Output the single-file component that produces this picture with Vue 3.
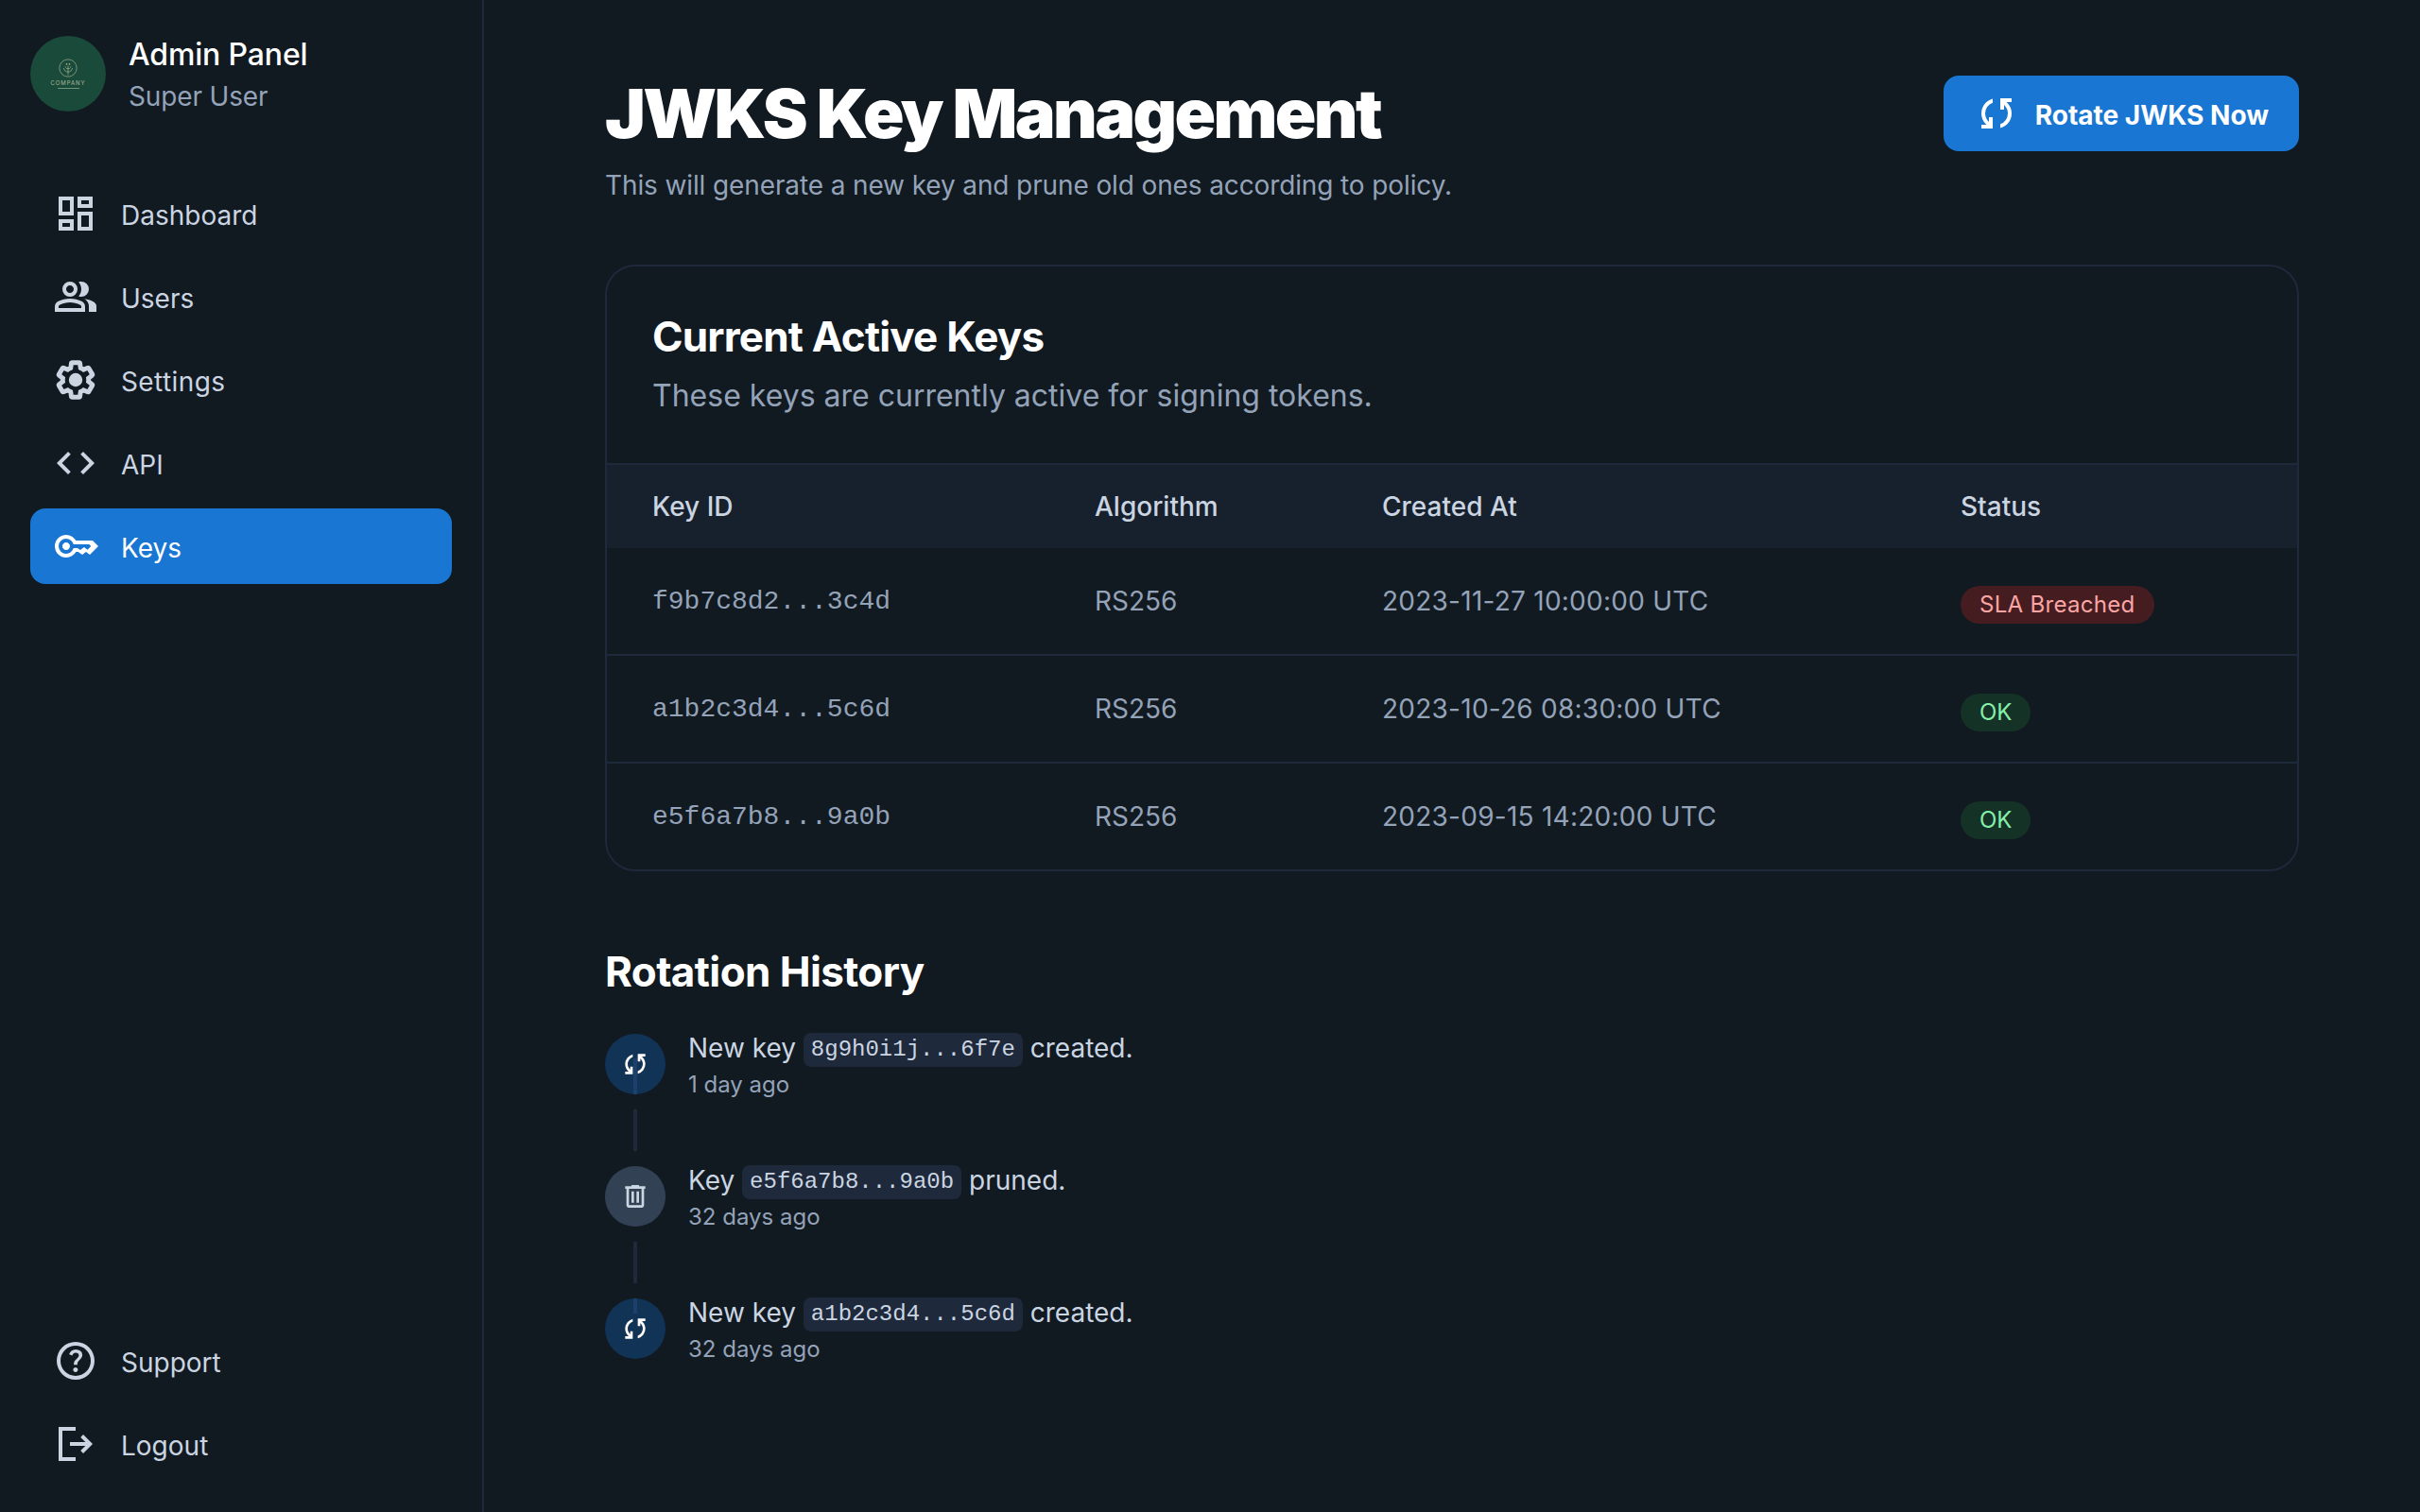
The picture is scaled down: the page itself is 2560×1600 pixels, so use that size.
<template>
  <div class="layout">
    <aside class="sidebar">
      <div class="profile">
        <div class="avatar">
          <svg class="logo-mark" viewBox="0 0 24 24" fill="none" stroke="#a9b89a" stroke-width="0.8">
            <circle cx="12" cy="12" r="11" />
            <path d="M12 21V9M12 17c-3 0-5-2-5.500-5M12 17c3 0 5-2 5.500-5M12 13c-2 0-3-1-3.500-3M12 13c2 0 3-1 3.500-3" />
            <path d="M9.500 6.500l1.500 1M14.500 6.500l-1.500 1" stroke="#d8c98a" stroke-width="1.400" />
          </svg>
          <span class="logo-word">COMPANY</span>
          <span class="logo-tag"></span>
        </div>
        <div class="profile-text">
          <div class="profile-name">Admin Panel</div>
          <div class="profile-role">Super User</div>
        </div>
      </div>

      <nav class="nav">
        <a v-for="item in navItems" :key="item.label" class="nav-item" :class="{ active: item.active }">
          <svg class="nav-icon" viewBox="0 0 24 24" fill="currentColor"><path :d="item.icon" /></svg>
          <span class="nav-label">{{ item.label }}</span>
        </a>
        <a class="nav-item">
          <svg class="nav-icon" viewBox="0 0 24 24" fill="none" stroke="currentColor">
            <path :d="gearPath" stroke-width="2.600" transform="translate(.6 .6) scale(.95)" />
            <circle cx="12" cy="12" r="3.600" fill="currentColor" stroke="none" />
          </svg>
          <span class="nav-label settings-label">Settings</span>
        </a>
        <a v-for="item in navItemsLower" :key="item.label" class="nav-item" :class="{ active: item.active }">
          <svg class="nav-icon" viewBox="0 0 24 24" fill="currentColor"><path :d="item.icon" /></svg>
          <span class="nav-label">{{ item.label }}</span>
        </a>
      </nav>

      <nav class="nav nav-bottom">
        <a v-for="item in footerItems" :key="item.label" class="nav-item">
          <svg class="nav-icon" viewBox="0 0 24 24" fill="currentColor"><path :d="item.icon" /></svg>
          <span class="nav-label">{{ item.label }}</span>
        </a>
      </nav>
    </aside>

    <main class="main">
      <header class="page-head">
        <div>
          <h1 class="page-title">JWKS Key Management</h1>
          <p class="page-sub">This will generate a new key and prune old ones according to policy.</p>
        </div>
        <button class="rotate-btn">
          <svg class="btn-icon" viewBox="0 0 24 24" fill="currentColor"><path :d="syncPath" /></svg>
          <span class="nav-label">Rotate JWKS Now</span>
        </button>
      </header>

      <section class="card">
        <div class="card-head">
          <h2 class="card-title">Current Active Keys</h2>
          <p class="card-sub">These keys are currently active for signing tokens.</p>
        </div>
        <table class="keys">
          <thead>
            <tr>
              <th class="col-id">Key ID</th>
              <th class="col-alg">Algorithm</th>
              <th class="col-date">Created At</th>
              <th>Status</th>
            </tr>
          </thead>
          <tbody>
            <tr v-for="key in keys" :key="key.id">
              <td class="mono">{{ key.id }}</td>
              <td>{{ key.alg }}</td>
              <td class="date">{{ key.created }}</td>
              <td class="status"><span class="badge" :class="key.ok ? 'badge-ok' : 'badge-bad'">{{ key.status }}</span></td>
            </tr>
          </tbody>
        </table>
      </section>

      <section class="history">
        <h2 class="history-title">Rotation History</h2>
        <ul class="timeline">
          <li v-for="(event, index) in history" :key="index" class="event">
            <div class="dot" :class="event.type">
              <span v-if="index === 0" class="dot-tail"></span>
              <span v-if="index === history.length - 1" class="dot-head"></span>
              <svg class="dot-icon" viewBox="0 0 24 24" fill="currentColor">
                <path :d="event.type === 'prune' ? trashPath : syncPath" />
              </svg>
            </div>
            <span v-if="index < history.length - 1" class="link"></span>
            <div class="event-body">
              <p class="event-text">{{ event.before }} <code class="chip">{{ event.key }}</code> {{ event.after }}</p>
              <p class="event-time">{{ event.time }}</p>
            </div>
          </li>
        </ul>
      </section>
    </main>
  </div>
</template>

<script setup>
const syncPath = 'M4 20v-2h2.75l-.4-.35q-1.225-1.225-1.787-2.662Q4 13.55 4 12.05q0-2.775 1.663-4.938Q7.325 4.95 10 4.25v2.1Q8.2 7 7.1 8.562 6 10.125 6 12.05q0 1.125.425 2.187Q6.85 15.3 7.75 16.2l.25.25V14h2v6Zm10-.25v-2.1q1.8-.65 2.9-2.212Q18 13.875 18 11.95q0-1.125-.425-2.187Q17.15 8.7 16.25 7.8L16 7.55V10h-2V4h6v2h-2.75l.4.35q1.225 1.225 1.788 2.662Q20 10.45 20 11.95q0 2.775-1.663 4.938Q16.675 19.05 14 19.75Z'
const trashPath = 'M7 21q-.825 0-1.412-.587Q5 19.825 5 19V6H4V4h5V3h6v1h5v2h-1v13q0 .825-.587 1.413Q17.825 21 17 21ZM17 6H7v13h10ZM9 17h2V8H9Zm4 0h2V8h-2ZM7 6v13Z'
const gearPath = 'M19.140 12.940c.04-.3.06-.61.06-.94 0-.32-.02-.64-.07-.94l2.030-1.580c.18-.14.23-.41.12-.61l-1.920-3.320c-.12-.22-.37-.29-.59-.22l-2.390.96c-.5-.38-1.030-.7-1.620-.94l-.36-2.540c-.04-.24-.24-.41-.48-.41h-3.840c-.24 0-.43.17-.47.41l-.36 2.540c-.59.24-1.130.57-1.620.94l-2.390-.96c-.22-.08-.47 0-.59.22L2.740 8.870c-.12.21-.08.47.12.61l2.030 1.580c-.05.3-.09.63-.09.94s.02.64.07.94l-2.030 1.580c-.18.14-.23.41-.12.61l1.920 3.320c.12.22.37.29.59.22l2.390-.96c.5.38 1.030.7 1.620.94l.36 2.540c.05.24.24.41.48.41h3.840c.24 0 .44-.17.47-.41l.36-2.540c.59-.24 1.130-.56 1.620-.94l2.390.96c.22.08.47 0 .59-.22l1.920-3.320c.12-.22.07-.47-.12-.61l-2.010-1.580z'

const navItems = [
  { label: 'Dashboard', icon: 'M19 5v2h-4V5h4M9 5v6H5V5h4m10 8v6h-4v-6h4M9 17v2H5v-2h4M21 3h-8v6h8V3zM11 3H3v10h8V3zm10 8h-8v10h8V11zm-10 4H3v6h8v-6z' },
  { label: 'Users', icon: 'M1 20v-2.800q0-.85.438-1.563.437-.712 1.162-1.087 1.550-.775 3.150-1.163Q7.350 13 9 13t3.250.387q1.600.388 3.150 1.163.725.375 1.162 1.087Q17 16.350 17 17.200V20Zm18 0v-3q0-1.100-.612-2.113-.613-1.012-1.738-1.737 1.275.15 2.400.512 1.125.363 2.100.888.900.5 1.375 1.112Q23 16.275 23 17v3ZM9 12q-1.650 0-2.825-1.175Q5 9.650 5 8q0-1.650 1.175-2.825Q7.350 4 9 4q1.650 0 2.825 1.175Q13 6.350 13 8q0 1.650-1.175 2.825Q10.650 12 9 12Zm10-4q0 1.650-1.175 2.825Q16.650 12 15 12q-.275 0-.7-.062-.425-.063-.7-.138.675-.8 1.038-1.775Q15 9.050 15 8q0-1.050-.362-2.025Q14.275 5 13.600 4.200q.350-.125.700-.162Q14.650 4 15 4q1.650 0 2.825 1.175Q19 6.350 19 8ZM3 18h12v-.8q0-.275-.137-.5-.138-.225-.363-.35-1.350-.675-2.725-1.012Q10.400 15 9 15t-2.775.338Q4.850 15.675 3.500 16.350q-.225.125-.363.35-.137.225-.137.5Zm6-8q.825 0 1.413-.588Q11 8.825 11 8t-.587-1.412Q9.825 6 9 6q-.825 0-1.412.588Q7 7.175 7 8t.588 1.412Q8.175 10 9 10Z' }
]
const navItemsLower = [
  { label: 'API', icon: 'M9.400 16.600 4.800 12l4.600-4.600L8 6l-6 6 6 6 1.400-1.400zm5.200 0 4.600-4.600-4.600-4.600L16 6l6 6-6 6-1.400-1.400z' },
  { label: 'Keys', active: true, icon: 'M7 14q-.825 0-1.412-.587Q5 12.825 5 12q0-.825.588-1.413Q6.175 10 7 10t1.412.587Q9 11.175 9 12q0 .825-.588 1.413Q7.825 14 7 14Zm0 4q-2.500 0-4.250-1.750T1 12q0-2.500 1.750-4.250T7 6q1.675 0 3.038.825Q11.400 7.650 12.200 9H21l3 3-4.500 4.500-2-1.500-2 1.500-2.125-1.500H12.200q-.8 1.350-2.162 2.175Q8.675 18 7 18Zm0-2q1.400 0 2.463-.85T10.875 13H13l1.450 1.025L16.500 12.500l1.775 1.375L20.150 12l-1-1h-8.275q-.35-1.300-1.412-2.150Q8.400 8 7 8 5.350 8 4.175 9.175 3 10.350 3 12q0 1.650 1.175 2.825Q5.350 16 7 16Z' }
]
const footerItems = [
  { label: 'Support', icon: 'M11.950 18q.525 0 .888-.363.362-.362.362-.887t-.362-.887q-.363-.363-.888-.363t-.888.363q-.362.362-.362.887t.362.887q.363.363.888.363Zm-.9-3.850h1.850q0-.825.188-1.300.187-.475 1.062-1.300.65-.65 1.025-1.238.375-.587.375-1.412 0-1.400-1.025-2.150T12.100 6q-1.425 0-2.312.75-.888.75-1.238 1.800l1.650.65q.125-.45.563-.975Q11.200 7.700 12.100 7.700q.8 0 1.200.437.4.438.4.963 0 .5-.3.938-.3.437-.75.812-1.100.975-1.350 1.475-.25.5-.25 1.825ZM12 22q-2.075 0-3.900-.788-1.825-.787-3.175-2.137-1.350-1.350-2.137-3.175Q2 14.075 2 12t.788-3.900q.787-1.825 2.137-3.175 1.350-1.350 3.175-2.138Q9.925 2 12 2t3.900.787q1.825.788 3.175 2.138 1.350 1.350 2.137 3.175Q22 9.925 22 12t-.788 3.900q-.787 1.825-2.137 3.175-1.350 1.350-3.175 2.137Q14.075 22 12 22Zm0-2q3.350 0 5.675-2.325Q20 15.350 20 12q0-3.350-2.325-5.675Q15.350 4 12 4 8.650 4 6.325 6.325 4 8.650 4 12q0 3.350 2.325 5.675Q8.650 20 12 20Z' },
  { label: 'Logout', icon: 'M3 3h9v2H5v14h7v2H3Zm13 14-1.375-1.450 2.550-2.550H9v-2h8.175l-2.550-2.550L16 7l5 5Z' }
]

const keys = [
  { id: 'f9b7c8d2...3c4d', alg: 'RS256', created: '2023-11-27 10:00:00 UTC', status: 'SLA Breached', ok: false },
  { id: 'a1b2c3d4...5c6d', alg: 'RS256', created: '2023-10-26 08:30:00 UTC', status: 'OK', ok: true },
  { id: 'e5f6a7b8...9a0b', alg: 'RS256', created: '2023-09-15 14:20:00 UTC', status: 'OK', ok: true }
]

const history = [
  { type: 'create', before: 'New key', key: '8g9h0i1j...6f7e', after: 'created.', time: '1 day ago' },
  { type: 'prune', before: 'Key', key: 'e5f6a7b8...9a0b', after: 'pruned.', time: '32 days ago' },
  { type: 'create', before: 'New key', key: 'a1b2c3d4...5c6d', after: 'created.', time: '32 days ago' }
]
</script>

<style>
html,
body {
  background: #111921;
}
</style>

<style scoped>
.layout {
  display: flex;
  min-height: 1600px;
  font-family: Inter, "Noto Sans", sans-serif;
  background: #111921;
  color: #fff;
}

.sidebar {
  box-sizing: border-box;
  width: 512px;
  height: 1600px;
  flex-shrink: 0;
  display: flex;
  flex-direction: column;
  padding: 32px;
  border-right: 2px solid #1e293b;
}

.profile {
  display: flex;
  align-items: center;
  gap: 24px;
  min-height: 92px;
  margin-bottom: 62px;
}

.avatar {
  width: 80px;
  height: 80px;
  border-radius: 50%;
  background: #1a4a3a;
  display: flex;
  flex-direction: column;
  align-items: center;
  justify-content: center;
  gap: 1px;
}

.logo-mark {
  width: 20px;
  height: 20px;
  margin-bottom: 2px;
}

.logo-word {
  font-size: 6px;
  line-height: 6px;
  letter-spacing: 0.16em;
  color: #a9b89a;
}

.logo-tag {
  width: 23px;
  height: 1px;
  margin-top: 1px;
  background: #71917d;
}

.profile-name {
  font-size: 32px;
  line-height: 48px;
  font-weight: 500;
  letter-spacing: -0.15px;
}

.profile-role {
  font-size: 28px;
  line-height: 40px;
  letter-spacing: -0.15px;
  color: #94a3b8;
}

.nav {
  display: flex;
  flex-direction: column;
  gap: 8px;
}

.nav-bottom {
  margin-top: auto;
}

.nav-item {
  display: flex;
  align-items: center;
  gap: 24px;
  height: 80px;
  padding: 0 24px;
  border-radius: 16px;
  font-size: 28px;
  font-weight: 400;
  color: #cbd5e1;
}

.nav-label {
  padding-top: 4px;
}

.settings-label {
  letter-spacing: 0.4px;
}

.nav-item.active {
  background: #1976d2;
  color: #fff;
}

.nav-icon {
  width: 48px;
  height: 48px;
  flex-shrink: 0;
}

.main {
  flex: 1;
  min-width: 0;
  padding: 80px 128px;
}

.page-head {
  display: flex;
  justify-content: space-between;
  align-items: flex-start;
  margin-bottom: 60px;
}

.page-title {
  margin: 0;
  font-size: 72px;
  line-height: 80px;
  font-weight: 900;
  letter-spacing: -2.65px;
}

.page-sub {
  margin: 12px 0 0;
  font-size: 28px;
  line-height: 48px;
  letter-spacing: -0.12px;
  color: #94a3b8;
}

.rotate-btn {
  display: flex;
  align-items: center;
  gap: 17px;
  height: 80px;
  padding: 0 32px;
  border: 0;
  border-radius: 16px;
  background: #1976d2;
  color: #fff;
  font-family: inherit;
  font-size: 28px;
  font-weight: 700;
}

.btn-icon {
  width: 48px;
  height: 48px;
}

.card {
  border: 2px solid #1e293b;
  border-radius: 32px;
  overflow: hidden;
}

.card-head {
  padding: 46px 48px 47px;
}

.card-title {
  margin: 0;
  font-size: 44px;
  line-height: 56px;
  font-weight: 700;
  letter-spacing: -0.8px;
}

.card-sub {
  margin: 11px 0 0;
  font-size: 32px;
  line-height: 48px;
  color: #94a3b8;
}

.keys {
  width: 100%;
  border-collapse: collapse;
  font-size: 28px;
}

.keys th {
  padding: 0 48px;
  height: 88px;
  text-align: left;
  font-weight: 500;
  color: #cbd5e1;
  background: #17212d;
  border-top: 2px solid #1e293b;
}

.col-id {
  width: 468px;
  box-sizing: border-box;
}

.col-alg {
  width: 304px;
  box-sizing: border-box;
}

.col-date {
  width: 612px;
  box-sizing: border-box;
}

.keys td {
  box-sizing: border-box;
  padding: 0 48px;
  height: 113px;
  color: #94a3b8;
  border-top: 2px solid #1e293b;
}

.keys tbody tr:nth-child(2) td {
  height: 114px;
}

.keys tbody tr:first-child td {
  border-top: 0;
}

.keys .status {
  padding-top: 8px;
}

.mono {
  font-family: "Liberation Mono", monospace;
}

.date {
  letter-spacing: 0.25px;
}

.badge {
  display: inline-block;
  padding: 0 20px;
  border-radius: 999px;
  font-size: 24px;
  line-height: 40px;
}

.badge-bad {
  background: #451d21;
  color: #fca5a5;
  letter-spacing: 0.3px;
}

.badge-ok {
  background: #153226;
  color: #86efac;
}

.history {
  margin-top: 78px;
}

.history-title {
  margin: 0 0 38px;
  font-size: 44px;
  line-height: 56px;
  font-weight: 700;
  letter-spacing: -0.6px;
}

.timeline {
  margin: 0;
  padding: 0;
  list-style: none;
  display: flex;
  flex-direction: column;
  gap: 70px;
}

.event {
  position: relative;
  display: flex;
  gap: 24px;
  height: 70px;
}

.dot {
  position: relative;
  width: 64px;
  height: 64px;
  border-radius: 50%;
  flex-shrink: 0;
  display: flex;
  align-items: center;
  justify-content: center;
}

.dot.create {
  background: #113355;
  color: #fff;
}

.dot.prune {
  background: #334155;
  color: #cbd5e1;
}

.dot-tail,
.dot-head {
  position: absolute;
  left: 30px;
  width: 4px;
  background: #1c3f6b;
}

.dot-tail {
  top: 26px;
  bottom: 0;
}

.dot-head {
  top: 0;
  height: 16px;
}

.dot-icon {
  position: relative;
  width: 32px;
  height: 32px;
}

.link {
  position: absolute;
  left: 30px;
  top: 80px;
  width: 4px;
  height: 44px;
  background: #1e293b;
}

.event-body {
  margin-top: -3px;
}

.event-text {
  margin: 0;
  font-size: 28px;
  line-height: 36px;
  color: #cbd5e1;
}

.chip {
  display: inline-block;
  vertical-align: middle;
  padding: 0 8px;
  border-radius: 8px;
  background: #1e293b;
  font-family: "Liberation Mono", monospace;
  font-size: 24px;
  line-height: 36px;
}

.event-time {
  margin: 3px 0 0;
  font-size: 24px;
  line-height: 32px;
  color: #94a3b8;
}
</style>
